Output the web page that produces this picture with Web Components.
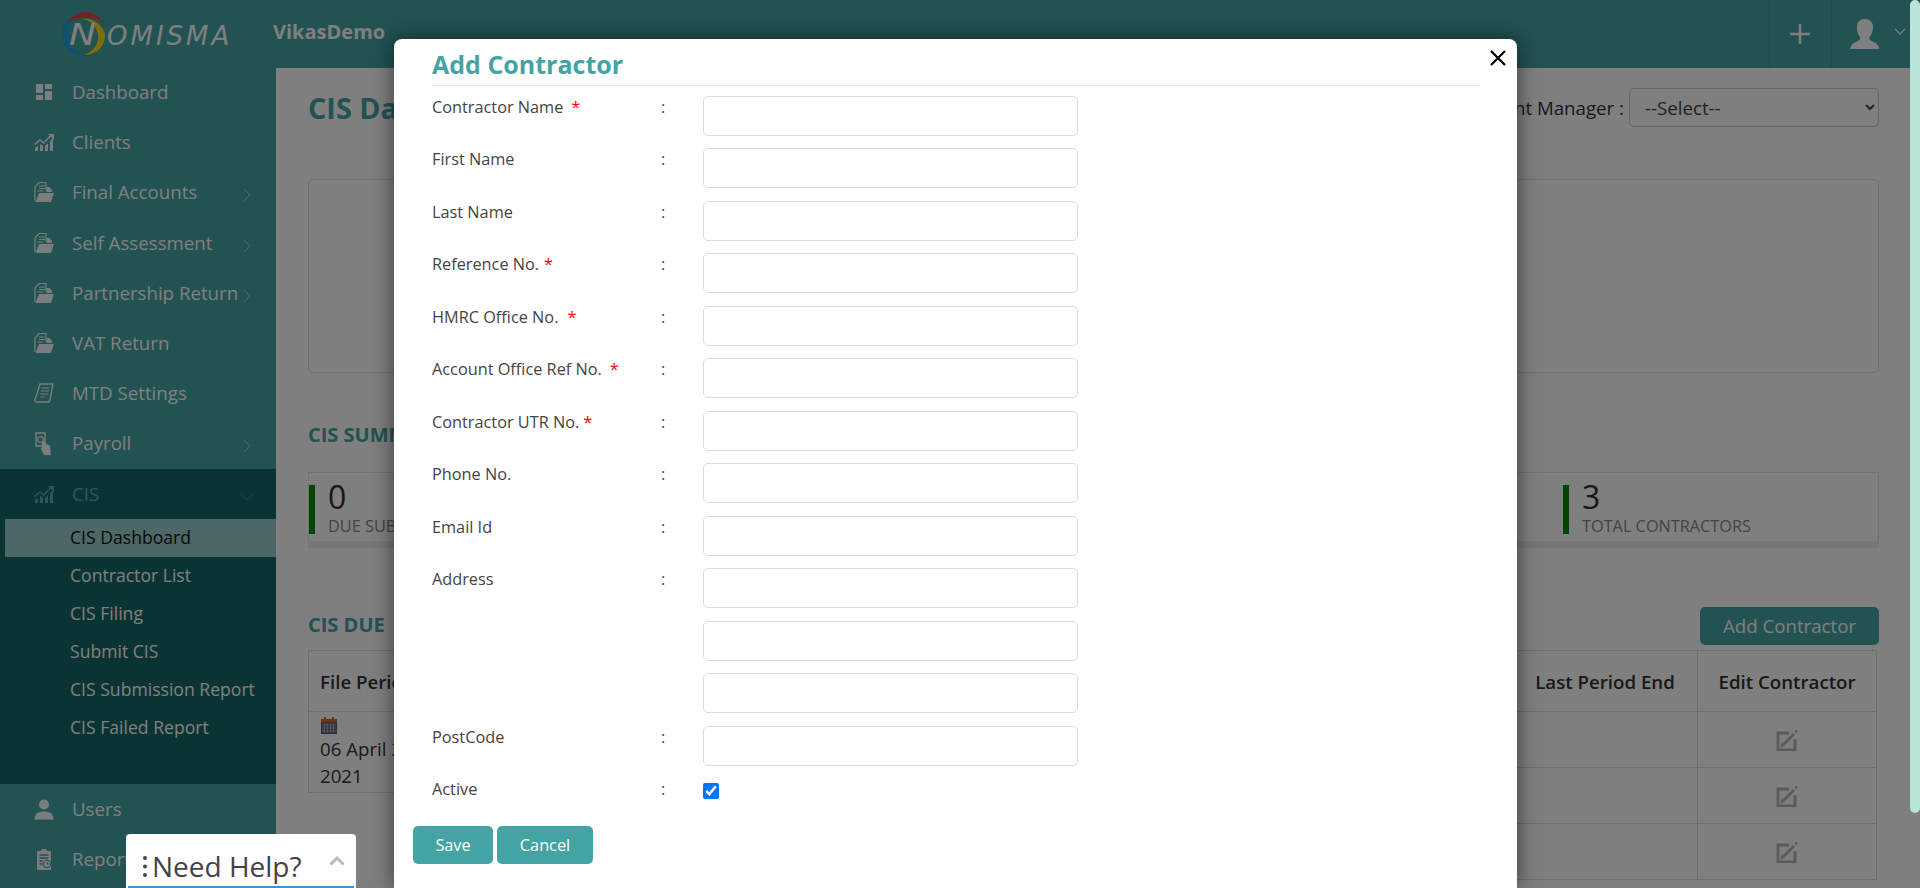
<!DOCTYPE html>
<html lang="en">
<head>
<meta charset="utf-8">
<title>Add Contractor</title>
<style>
  html, body { margin: 0; height: 888px; overflow: hidden; background: #fff; }
  body { font-family: "Open Sans", "Liberation Sans", sans-serif; color: #333; position: relative; }
</style>
</head>
<body>
<nm-app></nm-app>

<script>
const ICONS = {
  tiles: `<svg width="22" height="22" viewBox="0 0 22 22"><path fill="currentColor" d="M3 3h7v9H3zM12 3h7v5h-7zM3 14h7v5H3zM12 10h7v9h-7z"/></svg>`,
  chart: `<svg width="22" height="22" viewBox="0 0 22 22"><path fill="currentColor" d="M2 20v-3l3-2v5zM7 20v-6l1-1 2 2v5zM12 20v-5l3-3v8zM17 20V10l3-3v13z"/><path fill="none" stroke="currentColor" stroke-width="1.6" d="M1.5 13.5 7 9l3.500 3L18 4.500"/><path fill="currentColor" d="M15 3h6v6z"/></svg>`,
  folder: `<svg width="22" height="22" viewBox="0 0 22 22"><path fill="none" stroke="currentColor" stroke-width="1.2" d="M2 20V6l4-4.500h7v8"/><path fill="none" stroke="currentColor" stroke-width="1.2" d="M6 5h6M6 7.500h6M4.500 10h6"/><path fill="currentColor" d="M6 12h15l-3 9H2.500z"/><path fill="currentColor" d="M13.500 6h3l2.500 3v2h-5.500z"/></svg>`,
  sheet: `<svg width="22" height="22" viewBox="0 0 22 22"><path fill="none" stroke="currentColor" stroke-width="1.4" d="M7 2h13l-3 16c-.3 1.500-1.500 2-3 2H4c-2 0-3-2-1.500-3.500L7 2z"/><path stroke="currentColor" stroke-width="1.200" d="M8.500 6h8M8 9h8M7.500 12h8M7 15h5"/></svg>`,
  hand: `<svg width="22" height="24" viewBox="0 0 22 24"><path fill="none" stroke="currentColor" stroke-width="1.400" d="M3 2h9v13H3z"/><circle cx="7.500" cy="8.500" r="2.800" fill="none" stroke="currentColor" stroke-width="1.200"/><path fill="currentColor" d="M9 10h2l1 2 5 3 1 9h-7l-3-6 1-3z"/></svg>`,
  user: `<svg width="22" height="22" viewBox="0 0 22 22"><circle cx="11" cy="6.500" r="5" fill="currentColor"/><path fill="currentColor" d="M1.500 21.500c0-5.500 3.500-8 9.500-8s9.500 2.500 9.500 8z"/></svg>`,
  clip: `<svg width="22" height="22" viewBox="0 0 22 22"><path fill="currentColor" d="M4 3h4l1-2h4l1 2h4v19H4z"/><path stroke="#44a4a4" stroke-width="1.300" d="M6.500 7h9M6.500 10h9M6.500 13h3M6.500 16h3"/><circle cx="14" cy="16" r="3.800" fill="#fff" stroke="#44a4a4"/><path fill="none" stroke="#44a4a4" d="M14 14v2h2"/></svg>`
}

class NmApp extends HTMLElement {
  constructor() {
    super();
    this._root = this.attachShadow({ mode: "open" });
  }

  connectedCallback() {
    this._root.innerHTML = `
      <style>
        :host { display: block; width: 1920px; height: 888px; position: relative; overflow: hidden; }
        .shell { display: flex; flex-direction: column; height: 888px; }
        .body { display: flex; flex: 1; min-height: 0; }
        .backdrop { position: absolute; inset: 0; background: rgba(0,0,0,0.5); }
        .thumb { position: absolute; top: 0; right: 0; width: 10px; height: 813px; background: #b9e5d9; border-radius: 5px; }
      </style>
      <div class="shell">
        <nm-header></nm-header>
        <div class="body">
          <nm-sidebar></nm-sidebar>
          <nm-dashboard></nm-dashboard>
        </div>
      </div>
      <div class="backdrop"></div>
      <nm-help></nm-help>
      <div class="thumb"></div>
      <nm-modal></nm-modal>
    `;
  }
}

class NmHeader extends HTMLElement {
  constructor() {
    super();
    this._root = this.attachShadow({ mode: "open" });
  }

  connectedCallback() {
    this._root.innerHTML = `
      <style>
        :host { display: flex; align-items: center; height: 68px; background: #44a4a4; color: #fff; flex: none; padding-right: 10px; }
        .logo { width: 273px; flex: none; display: flex; align-items: center; padding-left: 69px; box-sizing: border-box; height: 68px; position: relative; }
        .logo svg { position: absolute; left: 62px; top: 12px; }
        .word { position: relative; display: flex; align-items: baseline; font: oblique 400 26px "DejaVu Sans", "Liberation Sans", sans-serif; letter-spacing: 3px; color: #fff; white-space: nowrap; }
        .word b { display: inline-block; width: 38px; font-weight: 400; font-size: 30px; letter-spacing: 0; transform: scaleX(1.2); transform-origin: left; }
        .name { font-size: 20px; font-weight: 700; flex: 1; margin-top: -6px; }
        .cell { height: 68px; display: flex; align-items: center; border-left: 1px solid #3d9494; box-sizing: border-box; }
        .plus { width: 62px; justify-content: center; padding-right: 2px; }
        .me { width: 79px; padding-left: 18px; gap: 14px; }
      </style>
      <div class="logo">
        <svg width="44" height="44" viewBox="0 0 44 44">
          <path fill="#20a0e0" d="M8 5A22 22 0 0 0 26 43.600C15 42 6 32 6 20 6 14 7 9 8 5z"/>
          <path fill="#ffdd20" d="M20 7C32 5 44 16 43 25 42 36 33 43 22 43 30 40 37 33 36 23 35 14 28 8 20 7z"/>
          <path fill="#f04048" d="M5 12C10 3 18 0 23 0 31 0 38 4 42 12 37 7 30 5 22 6 15 6 9 8 5 12z"/>
        </svg>
        <span class="word"><b>N</b><span>OMISMA</span></span>
      </div>
      <span class="name">VikasDemo</span>
      <div class="cell plus">
        <svg width="22" height="22" viewBox="0 0 22 22"><path stroke="currentColor" stroke-width="2.500" d="M11 1v20M1 11h20"/></svg>
      </div>
      <div class="cell me">
        <svg width="30" height="32" viewBox="0 0 30 32"><path fill="currentColor" d="M15 1c5 0 8 3 8 8 0 4-1 7-3.500 10-.5 2 0 3 3 4.500 3 1 6 3 7 7.500H0c1-4.500 4-6.500 7-7.500 3-1.500 3.500-2.500 3-4.500C7.500 16 7 13 7 9c0-5 3-8 8-8z"/></svg>
        <svg width="12" height="8" viewBox="0 0 12 8" style="margin-top:-4px"><path fill="none" stroke="currentColor" stroke-width="1.200" d="M1 1l5 5 5-5"/></svg>
      </div>
    `;
  }
}

class NmNavItem extends HTMLElement {
  constructor() {
    super();
    this._root = this.attachShadow({ mode: "open" });
  }

  connectedCallback() {
    const chev = this.getAttribute("chevron");
    let arrow = "";
    if (chev === "right") arrow = `<svg class="arrow" width="8" height="14" viewBox="0 0 8 14"><path fill="none" stroke="currentColor" d="M1 1l6 6-6 6"/></svg>`;
    if (chev === "down") arrow = `<svg class="arrow down" width="14" height="8" viewBox="0 0 14 8"><path fill="none" stroke="currentColor" d="M1 1l6 6 6-6"/></svg>`;
    this._root.innerHTML = `
      <style>
        :host { display: flex; align-items: center; height: 50.2px; color: inherit; font-size: 18.7px; position: relative; }
        .icon { width: 22px; height: 24px; margin-left: 33px; margin-right: 17px; display: flex; align-items: center; justify-content: center; opacity: .95; }
        .arrow { position: absolute; left: 243px; top: 21px; opacity: .55; }
        .arrow.down { left: 240px; top: 24px; }
        span { white-space: nowrap; margin-top: -1px; }
      </style>
      <div class="icon">${ICONS[this.getAttribute("icon")] || ""}</div>
      <span><slot></slot></span>
      ${arrow}
    `;
  }
}

class NmSubItem extends HTMLElement {
  constructor() {
    super();
    this._root = this.attachShadow({ mode: "open" });
  }

  connectedCallback() {
    const on = this.hasAttribute("active");
    this._root.innerHTML = `
      <style>
        :host { display: flex; align-items: center; height: 38px; box-sizing: border-box; padding-bottom: 2px; margin-left: 5px; padding-left: 65px; font-size: 17.6px; white-space: nowrap;
          color: ${on ? "#111" : "#fff"}; background: ${on ? "#9accCC" : "transparent"}; }
      </style>
      <slot></slot>
    `;
  }
}

class NmSidebar extends HTMLElement {
  constructor() {
    super();
    this._root = this.attachShadow({ mode: "open" });
  }

  connectedCallback() {
    this._root.innerHTML = `
      <style>
        :host { display: block; width: 276px; flex: none; background: #44a4a4; color: #fff; overflow: hidden; }
        .list { margin-top: -1px; }
        .cis { background: #146666; height: 315px; color: #fff; }
        .cis nm-nav-item { color: #55b5b5; height: 50px; }
      </style>
      <div class="list">
        <nm-nav-item icon="tiles">Dashboard</nm-nav-item>
        <nm-nav-item icon="chart">Clients</nm-nav-item>
        <nm-nav-item icon="folder" chevron="right">Final Accounts</nm-nav-item>
        <nm-nav-item icon="folder" chevron="right">Self Assessment</nm-nav-item>
        <nm-nav-item icon="folder" chevron="right">Partnership Return</nm-nav-item>
        <nm-nav-item icon="folder">VAT Return</nm-nav-item>
        <nm-nav-item icon="sheet">MTD Settings</nm-nav-item>
        <nm-nav-item icon="hand" chevron="right">Payroll</nm-nav-item>
        <div class="cis">
          <nm-nav-item icon="chart" chevron="down">CIS</nm-nav-item>
          <nm-sub-item active>CIS Dashboard</nm-sub-item>
          <nm-sub-item>Contractor List</nm-sub-item>
          <nm-sub-item>CIS Filing</nm-sub-item>
          <nm-sub-item>Submit CIS</nm-sub-item>
          <nm-sub-item>CIS Submission Report</nm-sub-item>
          <nm-sub-item>CIS Failed Report</nm-sub-item>
        </div>
        <nm-nav-item icon="user">Users</nm-nav-item>
        <nm-nav-item icon="clip">Reports</nm-nav-item>
      </div>
    `;
  }
}

class NmStat extends HTMLElement {
  constructor() {
    super();
    this._root = this.attachShadow({ mode: "open" });
  }

  connectedCallback() {
    this._root.innerHTML = `
      <style>
        :host { display: flex; gap: 13px; height: 49px; }
        .bar { width: 6px; background: #008a00; flex: none; }
        .num { font-size: 32px; line-height: 32px; color: #333; margin-top: -4px; }
        .lbl { font-size: 16.3px; line-height: 18px; color: #888; white-space: nowrap; margin-top: 4px; }
      </style>
      <div class="bar"></div>
      <div>
        <div class="num">${this.getAttribute("value")}</div>
        <div class="lbl"><slot></slot></div>
      </div>
    `;
  }
}

class NmDashboard extends HTMLElement {
  constructor() {
    super();
    this._root = this.attachShadow({ mode: "open" });
  }

  connectedCallback() {
    const edit = `<svg width="22" height="22" viewBox="0 0 22 22"><path fill="none" stroke="#b4b4b4" stroke-width="2.800" d="M13 4H2v17h17V10"/><path fill="none" stroke="#b4b4b4" stroke-width="2.800" d="M8 15l10-10"/><path fill="#b4b4b4" d="M5.500 13l4 4-5 1.500zM19 1h2.500v2.500H19z"/></svg>`;
    const cal = `<svg width="18" height="18" viewBox="0 0 18 18" style="display:block"><path fill="#e0641e" d="M1 2h16v4H1zM4 0h2v3H4zM12 0h2v3h-2z"/><path fill="#556080" d="M1 5h16v12H1z"/><path stroke="#b7bdcc" stroke-width=".8" d="M2 8h14M2 11h14M2 14h14M4.500 6v10M7.500 6v10M10.500 6v10M13.500 6v10"/></svg>`;
    this._root.innerHTML = `
      <style>
        :host { display: block; flex: 1; min-width: 0; padding: 20px 41px 0 32px; background: #fff; color: #333; overflow: hidden; }
        .top { display: flex; justify-content: space-between; align-items: center; height: 39px; }
        h1 { margin: 0; font-size: 28.8px; font-weight: 700; color: #44a4a4; }
        .mgr { display: flex; align-items: center; gap: 5px; font-size: 18.7px; }
        select { width: 250px; height: 39px; font: 400 18.7px "Open Sans", sans-serif; color: #444; padding-left: 11px; border: 1px solid #ccc; border-radius: 5px; background: #fff; }
        .panel { height: 194px; margin-top: 52px; border: 1px solid #ddd; border-radius: 5px; box-sizing: border-box; }
        h2 { margin: 0; font-size: 20px; font-weight: 700; color: #44a4a4; line-height: 24px; }
        .sum-h { margin-top: 50px; }
        .summary { height: 76px; margin-top: 25px; border: 1px solid #e4e4e4; border-bottom: 7px solid #eee; box-sizing: border-box; display: flex; justify-content: space-between; padding: 12px 0 0; }
        nm-stat:last-child { width: 315px; }
        .due { display: flex; justify-content: space-between; align-items: flex-start; margin-top: 59px; height: 43px; }
        .due h2 { margin-top: 6px; }
        .add { display: flex; align-items: center; justify-content: center; width: 179px; height: 38px; box-sizing: border-box; padding-bottom: 2px; background: #44a4a4; color: #fff; border-radius: 5px; font-size: 18.7px; }
        .tables { display: flex; justify-content: space-between; width: 1569px; align-items: flex-start; }
        table { border-collapse: collapse; font-size: 18.7px; color: #333; }
        th, td { border: 1px solid #ddd; padding: 0 10px; box-sizing: border-box; }
        th { font-weight: 600; height: 61px; white-space: nowrap; }
        .left { width: 236px; }
        .left th, .left td { text-align: left; padding: 0 11px; }
        .left td { height: 81px; line-height: 27px; vertical-align: top; padding-top: 5px; }
        .right { width: 365px; text-align: center; }
        .right td { height: 56px; padding: 0; }
        .right td svg { display: block; margin: 0 auto; }
        .c1 { width: 185px; }
        .c2 { width: 179px; }
      </style>
      <div class="top">
        <h1>CIS Dashboard</h1>
        <div class="mgr"><span>Account Manager :</span>
          <select><option>--Select--</option></select>
        </div>
      </div>
      <div class="panel"></div>
      <h2 class="sum-h">CIS SUMMARY</h2>
      <div class="summary">
        <nm-stat value="0">DUE SUBMISSIONS</nm-stat>
        <nm-stat value="3">TOTAL CONTRACTORS</nm-stat>
      </div>
      <div class="due">
        <h2>CIS DUE</h2>
        <div class="add">Add Contractor</div>
      </div>
      <div class="tables">
        <table class="left">
          <tr><th>File Period</th></tr>
          <tr><td>${cal}06 April 2021 - 05 May 2021</td></tr>
        </table>
        <table class="right">
          <tr><th class="c1">Last Period End</th><th class="c2">Edit Contractor</th></tr>
          <tr><td></td><td>${edit}</td></tr>
          <tr><td></td><td>${edit}</td></tr>
          <tr><td></td><td>${edit}</td></tr>
        </table>
      </div>
    `;
  }
}

class NmField extends HTMLElement {
  constructor() {
    super();
    this._root = this.attachShadow({ mode: "open" });
  }

  connectedCallback() {
    const req = this.getAttribute("req");
    const star = req !== null ? `<span class="star" style="margin-left:${req}px">*</span>` : "";
    const type = this.getAttribute("type") || "text";
    const control = type === "checkbox"
      ? `<input type="checkbox" checked>`
      : `<input type="text">`;
    this._root.innerHTML = `
      <style>
        :host { display: grid; grid-template-columns: 229px 42px 375px; height: ${type === "checkbox" ? 47.5 : 52.5}px; font-size: 16.3px; color: #444; }
        .lbl, .colon { line-height: 22px; }
        .colon { margin-top: 0; }
        .star { color: #f00; }
        input[type=text] { box-sizing: border-box; width: 375px; height: 40px; border: 1px solid #dcdcdc; border-radius: 5px; background: #fff; }
        input[type=checkbox] { width: 16px; height: 16px; margin: 4.500px 0 0; }
      </style>
      <div class="lbl"><slot></slot>${star}</div>
      <div class="colon">${this.hasAttribute("blank") ? "" : ":"}</div>
      <div>${control}</div>
    `;
  }
}

class NmModal extends HTMLElement {
  constructor() {
    super();
    this._root = this.attachShadow({ mode: "open" });
  }

  connectedCallback() {
    this._root.innerHTML = `
      <style>
        :host { position: absolute; left: 394px; top: 39px; width: 1123px; height: 849px; background: #fff; border-radius: 8px 8px 0 0; box-shadow: 0 0 22px rgba(0,0,0,0.55); padding: 0 38px; box-sizing: border-box; color: #444; }
        h3 { margin: 0; height: 47px; line-height: 50px; font-size: 25px; font-weight: 700; color: #44a4a4; border-bottom: 1px solid #e6e6e6; box-sizing: border-box; }
        .close { position: absolute; top: 11px; right: 11px; width: 16px; height: 16px; }
        form { display: block; padding-top: 9.9px; }
        .btns { display: flex; gap: 4px; margin-left: -19px; }
        button { height: 38px; border: 0; border-radius: 5px; background: #44a4a4; color: #fff; font: 400 16.3px "Open Sans", sans-serif; padding: 0; }
        .save { width: 80px; }
        .cancel { width: 96px; }
      </style>
      <h3>Add Contractor</h3>
      <svg class="close" viewBox="0 0 16 16"><path stroke="#000" stroke-width="2.200" d="M1 1l14 14M15 1L1 15"/></svg>
      <form>
        <nm-field req="8">Contractor Name</nm-field>
        <nm-field>First Name</nm-field>
        <nm-field>Last Name</nm-field>
        <nm-field req="5">Reference No.</nm-field>
        <nm-field req="9">HMRC Office No.</nm-field>
        <nm-field req="8">Account Office Ref No.</nm-field>
        <nm-field req="4">Contractor UTR No.</nm-field>
        <nm-field>Phone No.</nm-field>
        <nm-field>Email Id</nm-field>
        <nm-field>Address</nm-field>
        <nm-field blank></nm-field>
        <nm-field blank></nm-field>
        <nm-field>PostCode</nm-field>
        <nm-field type="checkbox">Active</nm-field>
        <div class="btns">
          <button type="button" class="save">Save</button>
          <button type="button" class="cancel">Cancel</button>
        </div>
      </form>
    `;
  }
}

class NmHelp extends HTMLElement {
  constructor() {
    super();
    this._root = this.attachShadow({ mode: "open" });
  }

  connectedCallback() {
    this._root.innerHTML = `
      <style>
        :host { position: absolute; left: 126px; top: 834px; width: 230px; height: 54px; background: #fff; border-radius: 4px 4px 0 0; box-sizing: border-box; padding: 0 2px; display: flex; flex-direction: column; }
        .row { flex: 1; display: flex; align-items: center; position: relative; padding-left: 24px; font-size: 28px; color: #444; white-space: nowrap; padding-top: 12px; line-height: 40px; }
        .dots { position: absolute; left: 15px; top: 22px; }
        .up { position: absolute; right: 9px; top: 22px; }
        .line { height: 5px; background: #3498db; flex: none; }
      </style>
      <div class="row">
        <svg class="dots" width="4" height="21" viewBox="0 0 4 21"><circle cx="2" cy="2" r="2" fill="#444"/><circle cx="2" cy="10.500" r="2" fill="#444"/><circle cx="2" cy="19" r="2" fill="#444"/></svg>
        Need Help?
        <svg class="up" width="16" height="10" viewBox="0 0 16 10"><path fill="none" stroke="#bbb" stroke-width="3" d="M1.500 8.500L8 2l6.500 6.500"/></svg>
      </div>
      <div class="line"></div>
    `;
  }
}

const tags = {
  "nm-header": NmHeader,
  "nm-nav-item": NmNavItem,
  "nm-sub-item": NmSubItem,
  "nm-sidebar": NmSidebar,
  "nm-stat": NmStat,
  "nm-dashboard": NmDashboard,
  "nm-field": NmField,
  "nm-modal": NmModal,
  "nm-help": NmHelp,
  "nm-app": NmApp
}
for (const name in tags) {
  if (!window.customElements.get(name)) window.customElements.define(name, tags[name])
}
</script>
</body>
</html>
